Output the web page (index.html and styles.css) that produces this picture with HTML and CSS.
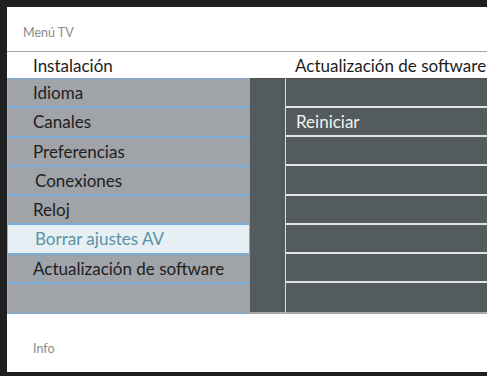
FILE: index.html
```html
<!DOCTYPE html>
<html>
<head>
    <title>Menú TV</title>
    <meta name="viewport" content="width=device-width, initial-scale=1.0">
    <link rel="stylesheet" href="styles.css">
</head>
<body>
    <div class="screen">
        <div class="top">Menú TV</div>
        <div class="titles">
            <div class="title-left">Instalación</div>
            <div class="title-right">Actualización de software</div>
        </div>
        <div class="panels">
            <ul class="menu">
                <li>Idioma</li>
                <li>Canales</li>
                <li>Preferencias</li>
                <li class="shift">Conexiones</li>
                <li>Reloj</li>
                <li class="active shift">Borrar ajustes AV</li>
                <li class="boxed"><span>Actualización de software</span></li>
                <li></li>
            </ul>
            <div class="spacer"></div>
            <ul class="sub">
                <li></li>
                <li>Reiniciar</li>
                <li></li>
                <li></li>
                <li></li>
                <li></li>
                <li></li>
                <li></li>
            </ul>
        </div>
        <div class="info">Info</div>
    </div>
</body>
</html>
```

FILE: styles.css
```css
html,
body {
    margin: 0;
    background-color: #ffffff;
    overflow: hidden;
}

body {
    font-family: Lato, "Open Sans", sans-serif;
}

.screen {
    width: 100%;
    height: 376px;
    box-sizing: border-box;
    border-top: 7px solid #1f1f1f;
    border-left: 7px solid #1f1f1f;
    border-bottom: 4px solid #1f1f1f;
    display: flex;
    flex-direction: column;
    overflow: hidden;
    background-color: #ffffff;
}

.top {
    height: 45px;
    border-bottom: 1px solid #a4a4a4;
    box-sizing: border-box;
    padding: 18px 0 0 16px;
    font-size: 12.5px;
    color: #8a8a8a;
}

.titles {
    height: 26px;
    display: flex;
    align-items: center;
    font-size: 17px;
    color: #1c1c1c;
}

.title-left {
    width: 243px;
    padding-left: 26px;
    box-sizing: border-box;
}

.title-right {
    padding-left: 45px;
    white-space: nowrap;
}

.panels {
    display: flex;
    height: 236px;
}

.menu,
.sub {
    list-style: none;
    margin: 0;
    padding: 0;
    display: grid;
    grid-template-rows: repeat(8, 1fr);
}

.menu {
    width: 243px;
    box-sizing: border-box;
    background-color: #a0a3a8;
    border: 1px solid #79acd6;
    border-left-color: #8cb4d4;
}

.menu li {
    display: flex;
    align-items: center;
    border-bottom: 2px solid #79acd6;
    padding-left: 25px;
    font-size: 17px;
    color: #1e1e1e;
}

.menu li:last-child {
    border-bottom: none;
}

.menu li.shift {
    padding-left: 27px;
}

.menu li.active {
    background-color: #e6eff4;
    color: #5a93a6;
}

.menu li.boxed {
    padding-left: 0;
    align-items: stretch;
}

.menu li.boxed span {
    display: flex;
    align-items: center;
    margin-left: 32px;
    flex: 1;
    border-top: 1px solid #79acd6;
    border-left: 1px solid #79acd6;
    margin-top: -1px;
    text-indent: -8px;
}

.spacer {
    width: 35px;
    background-color: #545b5c;
    border-top: 1px solid #4a4f50;
    border-bottom: 2px solid #a8a8a8;
    box-sizing: border-box;
}

.sub {
    flex: 1;
    background-color: #545b5c;
    border-left: 1px solid #d8dcdc;
    border-top: 1px solid #4a4f50;
    border-bottom: 2px solid #a8a8a8;
}

.sub li {
    display: flex;
    align-items: center;
    border-bottom: 2px solid #dfe3e3;
    padding-left: 10px;
    font-size: 17px;
    color: #f2f2f2;
}

.sub li:last-child {
    border-bottom: none;
}

.info {
    padding: 27px 0 0 26px;
    font-size: 12.5px;
    color: #8a8a8a;
}
```
